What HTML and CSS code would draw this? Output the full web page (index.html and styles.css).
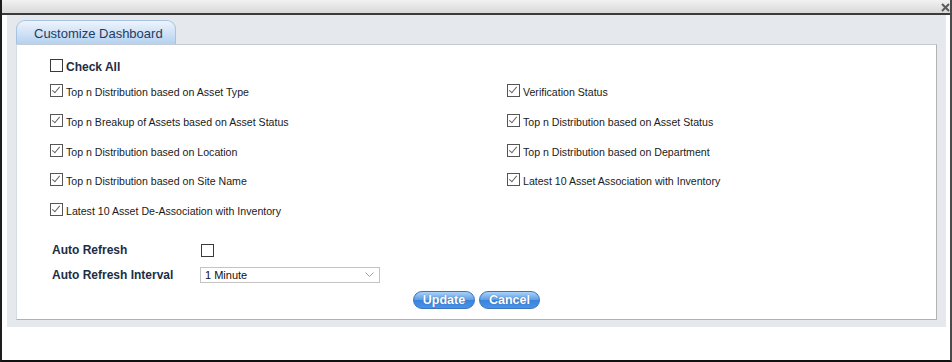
FILE: index.html
```html
<!DOCTYPE html>
<html lang="en">
<head>
  <meta charset="UTF-8">
  <title>Customize Dashboard</title>
  <link rel="stylesheet" href="styles.css">
</head>
<body>

  <div class="window">
    <div class="titlebar">
      <svg class="close" width="9" height="9" viewBox="0 0 9 9">
        <path d="M1 1 L8 8 M8 1 L1 8" stroke="#5a5a5a" stroke-width="2"/>
      </svg>
    </div>

    <div class="body">
      <div class="frame">
        <div class="tab">Customize Dashboard</div>

        <div class="panel">
          <label class="check-all">
            <span class="box"></span>
            <span class="txt">Check All</span>
          </label>

          <div class="options">
            <label class="opt"><span class="box checked"></span><span class="txt">Top n Distribution based on Asset Type</span></label>
            <label class="opt"><span class="box checked"></span><span class="txt">Verification Status</span></label>
            <label class="opt"><span class="box checked"></span><span class="txt">Top n Breakup of Assets based on Asset Status</span></label>
            <label class="opt"><span class="box checked"></span><span class="txt">Top n Distribution based on Asset Status</span></label>
            <label class="opt"><span class="box checked"></span><span class="txt">Top n Distribution based on Location</span></label>
            <label class="opt"><span class="box checked"></span><span class="txt">Top n Distribution based on Department</span></label>
            <label class="opt"><span class="box checked"></span><span class="txt">Top n Distribution based on Site Name</span></label>
            <label class="opt"><span class="box checked"></span><span class="txt">Latest 10 Asset Association with Inventory</span></label>
            <label class="opt"><span class="box checked"></span><span class="txt">Latest 10 Asset De-Association with Inventory</span></label>
          </div>

          <div class="settings">
            <div class="setting">
              <span class="setting-label">Auto Refresh</span>
              <span class="box"></span>
            </div>
            <div class="setting">
              <span class="setting-label">Auto Refresh Interval</span>
              <div class="select">
                <span>1 Minute</span>
                <svg width="9" height="6" viewBox="0 0 9 6"><path d="M0.5 0.5 L4.5 4.5 L8.5 0.5" fill="none" stroke="#a0a0a0" stroke-width="1"/></svg>
              </div>
            </div>
          </div>

          <div class="buttons">
            <button type="button" class="btn">Update</button>
            <button type="button" class="btn">Cancel</button>
          </div>
        </div>
      </div>
    </div>
  </div>

</body>
</html>
```

FILE: styles.css
```css
/* Dialog */
html, body {
  margin: 0;
  padding: 0;
  background: #fff;
}

body {
  font-family: "Liberation Sans", Arial, sans-serif;
  width: 952px;
  height: 362px;
}

.window {
  box-sizing: border-box;
  width: 952px;
  height: 362px;
  border-left: 2px solid #1e1e1e;
  border-right: 2px solid #4a4a4a;
  border-bottom: 2px solid #111;
  background: #fff;
  display: flex;
  flex-direction: column;
}

.titlebar {
  height: 13px;
  background: linear-gradient(#f2f2f2, #d9d9d9);
  border-bottom: 2px solid #3b3b3b;
  display: flex;
  justify-content: flex-end;
  align-items: center;
}

.close {
  margin-top: 1px;
}

.body {
  padding: 0 4px 0 5px;
}

.frame {
  background: #e5e9ee;
  height: 312px;
  box-sizing: border-box;
  padding: 5px 9px 0 9px;
  display: flex;
  flex-direction: column;
}

.tab {
  align-self: flex-start;
  box-sizing: border-box;
  width: 160px;
  height: 24px;
  padding-left: 17px;
  font-size: 13px;
  line-height: 25px;
  color: #1f3c60;
  background: linear-gradient(#eef4fc, #b5d1f0);
  border: 1px solid #a7c3e2;
  border-bottom: none;
  border-radius: 9px 9px 0 0;
}

.panel {
  background: #fff;
  border-top: 1px solid #c3ccd6;
  border-left: 1px solid #d5dbe2;
  border-right: 1px solid #b3b3b3;
  border-bottom: 1px solid #b0b0b0;
  height: 276px;
  box-sizing: border-box;
  padding: 14px 0 0 33px;
}

/* checkboxes */
.box {
  box-sizing: border-box;
  width: 13px;
  height: 13px;
  border: 1px solid #3a3a3a;
  background: #fff;
  flex: none;
  position: relative;
}

.box.checked {
  border-color: #555;
}

.box.checked::after {
  content: "";
  position: absolute;
  left: 3px;
  top: 0px;
  width: 3px;
  height: 7px;
  border-right: 1.5px solid #666;
  border-bottom: 1.5px solid #666;
  transform: rotate(40deg);
}

.check-all,
.opt {
  display: flex;
  align-items: flex-start;
  gap: 3px;
  height: 13px;
}

.txt {
  padding-top: 2px;
  line-height: 13px;
  white-space: nowrap;
}

.check-all {
  font-size: 12px;
  font-weight: bold;
  color: #1c2d44;
}

.options {
  margin-top: 12px;
  display: grid;
  grid-template-columns: 457px 1fr;
  row-gap: 16.75px;
}

.opt {
  font-size: 10.6px;
  color: #1a1a1a;
}

.settings {
  margin-top: 27px;
  margin-left: 2px;
  display: flex;
  flex-direction: column;
  gap: 10px;
}

.setting {
  display: flex;
  align-items: center;
}

.setting-label {
  width: 149px;
  font-size: 12px;
  font-weight: bold;
  color: #1c2d44;
}

.setting .box {
  margin-top: 1px;
}

.select {
  box-sizing: border-box;
  width: 180px;
  height: 16px;
  border: 1px solid #c4c4c4;
  margin-left: -1px;
  display: flex;
  align-items: center;
  justify-content: space-between;
  padding: 0 5px 0 4px;
  font-size: 11px;
  color: #111;
}

.buttons {
  margin-top: 8px;
  margin-left: -33px;
  display: flex;
  justify-content: center;
  gap: 4px;
}

.btn {
  box-sizing: border-box;
  height: 18px;
  padding: 0;
  border: 1px solid #3d72bd;
  border-radius: 9px;
  background: linear-gradient(#a9d2f8 0%, #5b9de6 50%, #3a82db 51%, #4a93e8 100%);
  color: #fff;
  font-family: "Liberation Sans", Arial, sans-serif;
  font-size: 12.5px;
  font-weight: bold;
  line-height: 16px;
  text-shadow: 0 0 1px #2a5aa0;
  cursor: pointer;
}

.btn:first-child {
  width: 62px;
}

.btn:last-child {
  width: 61px;
}
```
